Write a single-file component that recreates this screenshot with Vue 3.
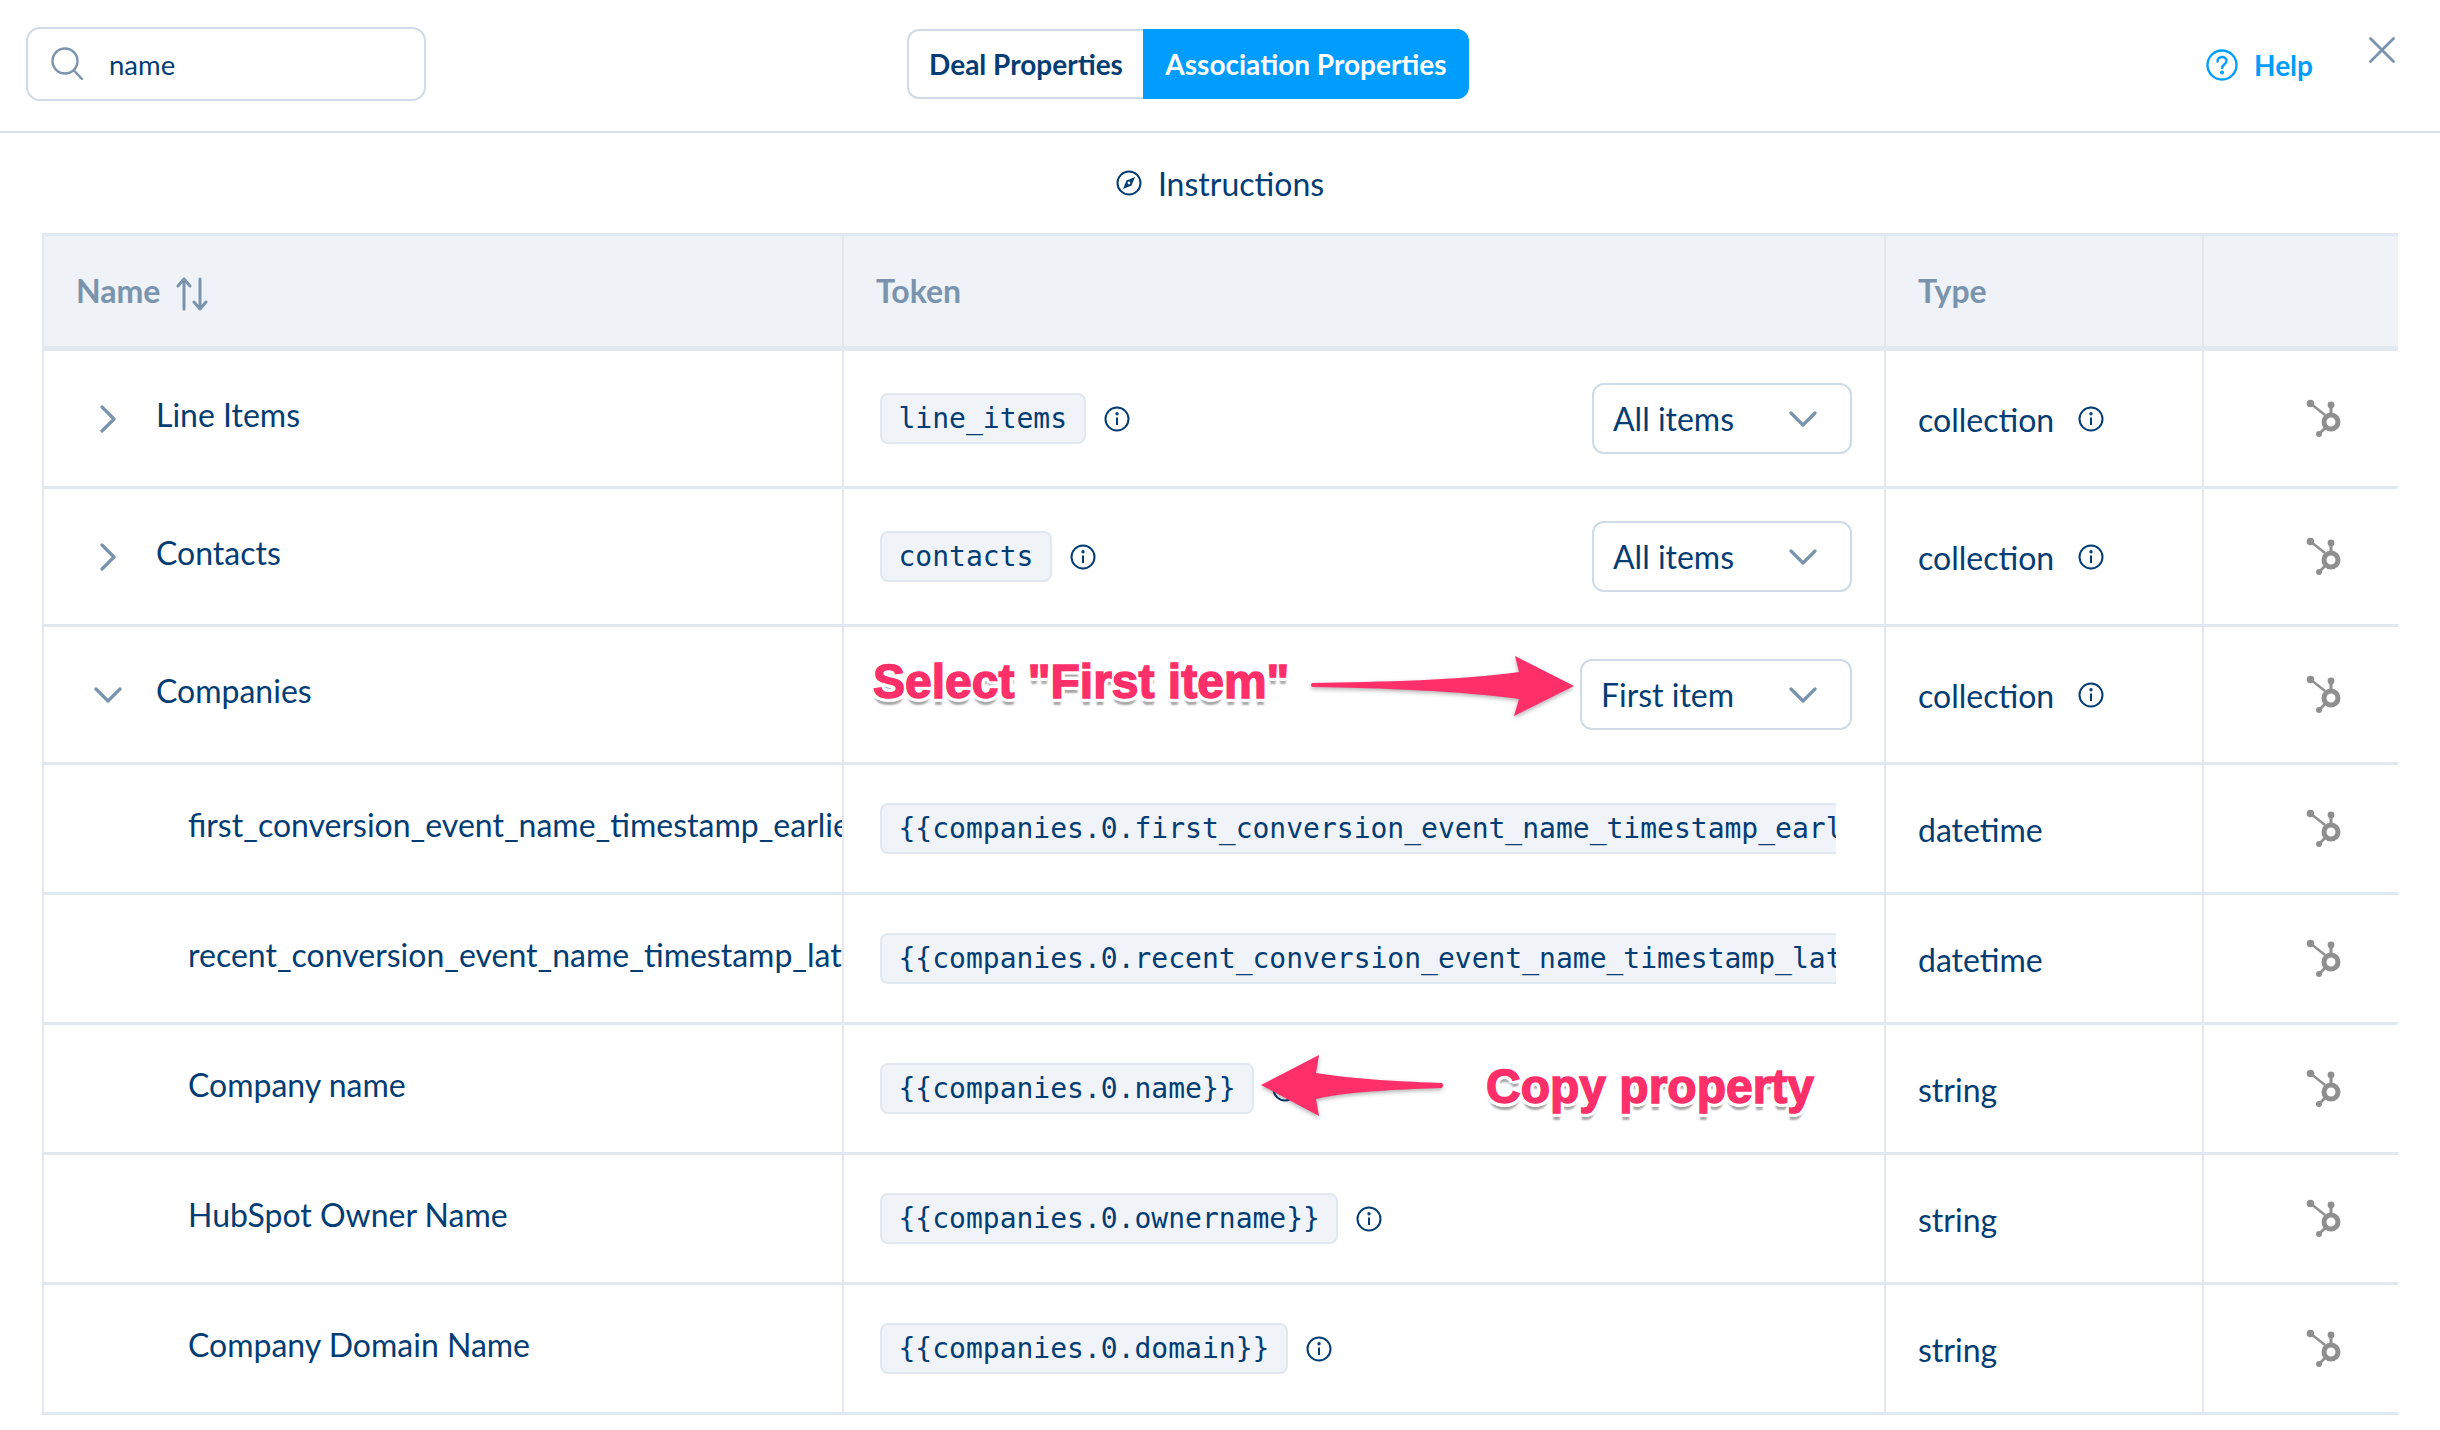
<script setup>
const rows = [
  { name: 'Line Items', token: 'line_items', type: 'collection', tall: true, chev: 'right', select: 'All items', info: true, typeInfo: true },
  { name: 'Contacts', token: 'contacts', type: 'collection', tall: true, chev: 'right', select: 'All items', info: true, typeInfo: true },
  { name: 'Companies', type: 'collection', tall: true, chev: 'down', select: 'First item', wide: true, typeInfo: true },
  { name: 'first_conversion_event_name_timestamp_earliest', token: '{{companies.0.first_conversion_event_name_timestamp_earliest}}', type: 'datetime', clip: true },
  { name: 'recent_conversion_event_name_timestamp_latest', token: '{{companies.0.recent_conversion_event_name_timestamp_latest}}', type: 'datetime', clip: true },
  { name: 'Company name', token: '{{companies.0.name}}', type: 'string', info: true },
  { name: 'HubSpot Owner Name', token: '{{companies.0.ownername}}', type: 'string', info: true },
  { name: 'Company Domain Name', token: '{{companies.0.domain}}', type: 'string', info: true },
]
</script>

<template>
  <div class="page">
    <header class="topbar">
      <label class="search">
        <svg class="search-icon" viewBox="0 0 34 34" width="34" height="34" fill="none" stroke="#7a94ae" stroke-width="2.4" stroke-linecap="round">
          <circle cx="15" cy="14" r="12.5" />
          <path d="M24 23.5 32 32" />
        </svg>
        <span>name</span>
      </label>
      <div class="tabs">
        <span class="tab">Deal Properties</span>
        <span class="tab active">Association Properties</span>
      </div>
      <div class="help">
        <svg viewBox="0 0 32 32" width="32" height="32" fill="none" stroke="#009dff" stroke-width="2.4" stroke-linecap="round">
          <circle cx="16" cy="16" r="14.5" />
          <path d="M11.5 12.5c0-2.8 2-4.5 4.6-4.5s4.4 1.700 4.400 4c0 3.500-4.400 3.600-4.400 7" />
          <circle cx="16" cy="23.500" r="0.8" fill="#009dff" />
        </svg>
        <span>Help</span>
      </div>
      <svg class="close" viewBox="0 0 26 26" width="26" height="26" fill="none" stroke="#7a94ae" stroke-width="2.800" stroke-linecap="round">
        <path d="M1.500 1.500 24.500 24.500M24.500 1.500 1.500 24.500" />
      </svg>
    </header>

    <div class="instructions">
      <svg viewBox="0 0 26 26" width="26" height="26" fill="none" stroke="#033d73" stroke-width="2">
        <circle cx="13" cy="13" r="11.500" />
        <path d="M19 7 15.500 15.500 7 19 10.500 10.500Z" fill="#033d73" stroke="none" />
        <circle cx="13" cy="13" r="1.400" fill="#fff" stroke="none" />
      </svg>
      <span>Instructions</span>
    </div>

    <section class="table">
      <div class="row head">
        <div class="cell name-head">
          <span>Name</span>
          <svg viewBox="0 0 34 34" width="34" height="34" fill="none" stroke="#7a94ae" stroke-width="3" stroke-linecap="round" stroke-linejoin="round">
            <path d="M9 32V2M3 9 9 2l6 7M25 2v30M19 25l6 7 6-7" />
          </svg>
        </div>
        <div class="cell">Token</div>
        <div class="cell">Type</div>
        <div class="cell"></div>
      </div>

      <div v-for="r in rows" :key="r.name" class="row" :class="{ tall: r.tall }">
        <div class="cell name" :class="{ child: !r.tall }">
          <svg v-if="r.chev === 'right'" class="chev" viewBox="0 0 16 28" width="16" height="28" fill="none" stroke="#7a94ae" stroke-width="3.200" stroke-linecap="round" stroke-linejoin="round">
            <path d="M2 2 14 14 2 26" />
          </svg>
          <svg v-else-if="r.chev === 'down'" class="chev-down" viewBox="0 0 28 16" width="28" height="16" fill="none" stroke="#7a94ae" stroke-width="3.200" stroke-linecap="round" stroke-linejoin="round">
            <path d="M2 2 14 14 26 2" />
          </svg>
          <span class="name-text">{{ r.name }}</span>
        </div>
        <div class="cell token">
          <code v-if="r.token" class="chip" :class="{ clip: r.clip }">{{ r.token }}</code>
          <svg v-if="r.info" class="info" viewBox="0 0 26 26" width="26" height="26" fill="none" stroke="#033d73" stroke-width="2">
            <circle cx="13" cy="13" r="11.500" />
            <path d="M13 11.500V19" />
            <circle cx="13" cy="7.800" r="0.700" fill="#033d73" />
          </svg>
          <div v-if="r.select" class="select" :class="{ wide: r.wide }">
            <span>{{ r.select }}</span>
            <svg viewBox="0 0 28 16" width="28" height="16" fill="none" stroke="#7a94ae" stroke-width="3.200" stroke-linecap="round" stroke-linejoin="round">
              <path d="M2 2 14 14 26 2" />
            </svg>
          </div>
        </div>
        <div class="cell type">
          <span>{{ r.type }}</span>
          <svg v-if="r.typeInfo" class="info" viewBox="0 0 26 26" width="26" height="26" fill="none" stroke="#033d73" stroke-width="2">
            <circle cx="13" cy="13" r="11.500" />
            <path d="M13 11.500V19" />
            <circle cx="13" cy="7.800" r="0.700" fill="#033d73" />
          </svg>
        </div>
        <div class="cell hub">
          <svg viewBox="0 0 36 40" width="36" height="40" fill="#8f8f8f" stroke="none">
            <circle cx="4.500" cy="4.500" r="3.800" />
            <circle cx="25" cy="6" r="3.400" />
            <circle cx="13" cy="35" r="3" />
            <path d="M4.500 4.500 19 16" stroke="#8f8f8f" stroke-width="2.400" />
            <path d="M25 6V16" stroke="#8f8f8f" stroke-width="3" />
            <path d="M13 35 20 28" stroke="#8f8f8f" stroke-width="2.600" />
            <circle cx="25" cy="23" r="7" fill="none" stroke="#8f8f8f" stroke-width="5" />
          </svg>
        </div>
      </div>
    </section>

    <div class="note select-note">Select "First item"</div>
    <svg class="arrow arrow-select" viewBox="0 0 264 62" width="264" height="62">
      <path d="M1 27C70 26 150 24 208 16L204 0 263 30 203 60 208 43C150 35 70 32 1 31Q-1 29 1 27Z" fill="#ff2f6a" />
    </svg>
    <div class="note copy-note">Copy property</div>
    <svg class="arrow arrow-copy" viewBox="0 0 184 62" width="184" height="62">
      <path d="M182 28C150 27 90 24 56 18L59 0 1 30 59 61 56 44C90 36 150 34 182 33Q184 30 182 28Z" fill="#ff2f6a" />
    </svg>
  </div>
</template>

<style scoped>
.page {
  position: relative;
  width: 2440px;
  height: 1430px;
  overflow: hidden;
  background: #fff;
  color: #033d73;
  font-family: Lato, "Liberation Sans", sans-serif;
  font-size: 32px;
}
.topbar {
  position: relative;
  height: 131px;
  border-bottom: 2px solid #dcdfe3;
  box-sizing: content-box;
  display: flex;
  align-items: flex-start;
}
.search {
  width: 400px;
  height: 74px;
  margin: 27px 0 0 26px;
  box-sizing: border-box;
  border: 2px solid #cfdbe6;
  border-radius: 14px;
  display: flex;
  align-items: center;
  gap: 25px;
  padding-left: 22px;
  font-size: 27.500px;
}
.search-icon {
  flex: none;
}
.tabs {
  position: absolute;
  left: 907px;
  top: 29px;
  width: 562px;
  height: 70px;
  display: flex;
  font-size: 28px;
  font-weight: 700;
}
.tab {
  box-sizing: border-box;
  width: 236px;
  display: flex;
  align-items: center;
  justify-content: center;
  border: 2px solid #cfdbe6;
  border-right: 0;
  border-radius: 12px 0 0 12px;
}
.tab.active {
  width: 326px;
  border: 0;
  border-radius: 0 12px 12px 0;
  background: #009dff;
  color: #fff;
}
.help {
  position: absolute;
  left: 2206px;
  top: 48px;
  display: flex;
  align-items: center;
  gap: 16px;
  color: #009dff;
  font-size: 28px;
  font-weight: 700;
}
.close {
  position: absolute;
  left: 2369px;
  top: 37px;
}
.instructions {
  height: 100px;
  display: flex;
  align-items: center;
  justify-content: center;
  gap: 16px;
  font-size: 32px;
  box-sizing: border-box;
}
.table {
  margin-left: 42px;
  width: 2356px;
  border-top: 3px solid #e1e8f0;
  box-sizing: border-box;
}
.row {
  display: grid;
  grid-template-columns: 798px 1042px 318px 196px;
  height: 130px;
  box-sizing: border-box;
  border-bottom: 3px solid #e1e8f0;
  border-left: 2px solid #e1e8f0;
}
.row.tall {
  height: 138px;
}
.row.head {
  height: 115px;
  border-bottom-width: 5px;
  background: #eff2f7;
  color: #7a94ae;
  font-weight: 700;
  font-size: 32px;
}
.row.head .cell > span,
.row.head .cell:not(.name-head) {
  padding-bottom: 1px;
}
.cell {
  min-width: 0;
  display: flex;
  align-items: center;
  box-sizing: border-box;
  padding-left: 32px;
  border-left: 2px solid #e1e8f0;
}
.cell:first-child {
  border-left: 0;
}
.name-head {
  padding-left: 32px;
  gap: 15px;
}
.name-head svg {
  margin-top: 5px;
}
.name {
  padding-left: 0;
  overflow: hidden;
  white-space: nowrap;
}
.name.child {
  padding-left: 144px;
}
.name-text {
  margin-bottom: 8px;
}
.chev {
  margin-left: 56px;
  margin-right: 40px;
  flex: none;
}
.chev-down {
  margin-left: 50px;
  margin-right: 34px;
  flex: none;
}
.token {
  padding-left: 36px;
  gap: 18px;
  position: relative;
}
.chip {
  box-sizing: border-box;
  height: 51px;
  padding: 0 16.500px;
  display: flex;
  align-items: center;
  background: #f0f3f8;
  border: 2px solid #e1e8f0;
  border-radius: 8px;
  font-family: "DejaVu Sans Mono", "Liberation Mono", monospace;
  font-size: 28px;
  white-space: nowrap;
}
.chip.clip {
  width: 956px;
  overflow: hidden;
  border-right: 0;
  border-radius: 8px 0 0 8px;
  justify-content: flex-start;
}
.info {
  flex: none;
}
.select {
  position: absolute;
  right: 32px;
  top: 32px;
  width: 260px;
  height: 71px;
  box-sizing: border-box;
  border: 2px solid #cfdbe6;
  border-radius: 12px;
  display: flex;
  align-items: center;
  justify-content: space-between;
  padding: 0 33px 0 19px;
  font-size: 32px;
}
.select.wide {
  width: 272px;
}
.type {
  gap: 24px;
  padding-top: 1px;
}
.hub {
  padding-left: 102px;
}
.note {
  position: absolute;
  font-family: "Liberation Sans", Arial, sans-serif;
  font-weight: 700;
  font-size: 48px;
  line-height: 1;
  color: #ff2f6a;
  white-space: nowrap;
  -webkit-text-stroke: 1.500px #ff2f6a;
  text-shadow: 4px 0 0 #fff, -4px 0 0 #fff, 0 4px 0 #fff, 0 -4px 0 #fff, 3px 3px 0 #fff, -3px 3px 0 #fff, 3px -3px 0 #fff, -3px -3px 0 #fff, 0 7px 2px rgba(0, 0, 0, 0.35);
}
.select-note {
  left: 873px;
  top: 658px;
}
.copy-note {
  left: 1486px;
  top: 1063px;
}
.arrow {
  position: absolute;
  filter: drop-shadow(0 2px 2px rgba(0, 0, 0, 0.3));
}
.arrow-select {
  left: 1311px;
  top: 656px;
}
.arrow-copy {
  left: 1260px;
  top: 1055px;
}
</style>
